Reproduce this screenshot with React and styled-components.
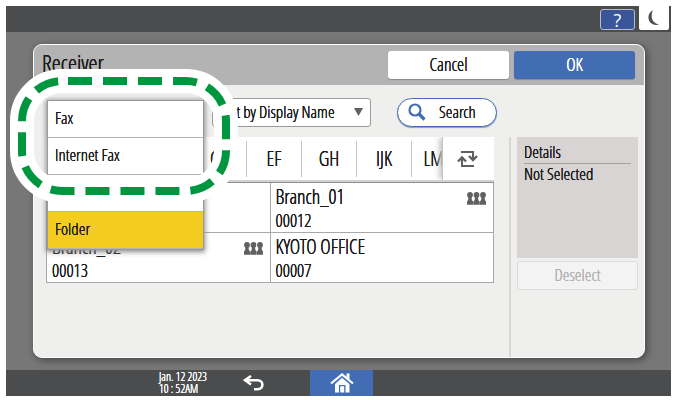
import React from "react";
import styled, { createGlobalStyle } from "styled-components";

const color = {
  bar: "#4b4c4e",
  backdrop: "#777777",
  header: "#b3b3b3",
  panel: "#efefed",
  line: "#a9a9a9",
  blue: "#426db5",
  navy: "#3a5699",
  yellow: "#f4cc20",
  green: "#009640",
  ink: "#1a1a1a",
  icon: "#5f6062",
};

const GlobalStyle = createGlobalStyle`
  *, *::before, *::after { box-sizing: border-box; }
  body { margin: 0; background: #fff; }
  body, button {
    font-family: "Open Sans Condensed Light", "Open Sans Condensed", "Open Sans", sans-serif;
    font-weight: 300;
    color: ${color.ink};
    text-shadow: 0 0 currentColor, 0 0 currentColor;
  }
  button { border: 0; padding: 0; background: none; cursor: pointer; }
  h1, h2, p, ul { margin: 0; padding: 0; font-weight: 300; }
  ul { list-style: none; }
  svg { display: block; }
`;

const Screen = styled.div`
  display: flex;
  flex-direction: column;
  min-height: calc(100vh - 10px);
  margin: 6px 4px 4px 6px;
  background: ${color.backdrop};
`;

const StatusBar = styled.header`
  display: flex;
  justify-content: flex-end;
  align-items: flex-start;
  gap: 4px;
  height: 26px;
  padding-right: 2px;
  background: ${color.bar};
`;

const HelpButton = styled.button`
  width: 35px;
  height: 21px;
  margin-top: 3px;
  border: 1px solid #b9bdc9;
  border-radius: 3px;
  background: ${color.navy};
  color: #fff;
  font: 400 18px/18px "Open Sans", sans-serif;
  text-shadow: none;
`;

const SleepButton = styled.button`
  display: grid;
  place-items: center;
  width: 30px;
  height: 24px;
  border-radius: 0 0 2px 2px;
  background: #fff;
`;

const Panel = styled.main`
  position: relative;
  flex: 1;
  display: flex;
  flex-direction: column;
  margin: 12px 26px 12px 27px;
  border: 1px solid #fff;
  border-radius: 9px;
  background: ${color.panel};
  box-shadow: 2px 2px 6px 1px #4c4f4e;
`;

const PanelHeader = styled.div`
  display: flex;
  align-items: center;
  gap: 5px;
  height: 40px;
  padding: 0 9px 0 8px;
  border-radius: 8px 8px 0 0;
  background: ${color.header};
`;

const Title = styled.h1`
  flex: 1;
  font-size: 23px;
  line-height: 28px;
  padding-bottom: 4px;
`;

const ActionButton = styled.button`
  width: 121px;
  height: 28px;
  padding-bottom: 2px;
  border-radius: 3px;
  background: ${(p) => (p.$primary ? color.blue : "#fff")};
  color: ${(p) => (p.$primary ? "#fff" : color.ink)};
  font-size: 18px;
  line-height: 24px;
  box-shadow: 0 1px 1px #888;
`;

const Toolbar = styled.div`
  display: flex;
  align-items: center;
  gap: 26px;
  height: 52px;
  padding: 2px 0 0 178px;
`;

const SortButton = styled.button`
  display: flex;
  align-items: center;
  justify-content: space-between;
  width: 159px;
  height: 29px;
  padding: 0 7px 0 5px;
  border: 1px solid #9a9a9a;
  border-radius: 3px;
  background: #fff;
  font-size: 17px;
  line-height: 24px;
`;

const SearchButton = styled.button`
  display: flex;
  align-items: center;
  gap: 13px;
  width: 100px;
  height: 29px;
  padding-left: 10px;
  border: 1px solid ${color.blue};
  border-radius: 15px;
  background: #fff;
  box-shadow: 0 1px 1px #8a9cc0;
  font-size: 17px;
  line-height: 24px;
`;

const Content = styled.div`
  flex: 1;
  display: flex;
  padding: 0 6px 0 12px;
`;

const AddressBook = styled.section`
  flex: 1;
  min-width: 0;
`;

const TabBar = styled.div`
  display: flex;
  height: 45px;
  border-radius: 3px 3px 0 0;
  background: #fff;
  border-bottom: 2px solid #d2d2d2;
`;

const TabStrip = styled.nav`
  flex: 1;
  display: flex;
  align-items: center;
  min-width: 0;
  overflow: hidden;
`;

const Tab = styled.button`
  flex: none;
  width: ${(p) => (p.$wide ? 91 : 55)}px;
  height: 36px;
  border-right: 1px solid #c4c4c4;
  font-size: 20px;
  line-height: 36px;
`;

const SwitchButton = styled.button`
  display: grid;
  place-items: center;
  width: 52px;
  height: 43px;
  padding-right: 3px;
  border-left: 1px solid #c4c4c4;
  background: #fff;
  box-shadow: -4px 0 5px -1px #c8c8c8;
  clip-path: inset(0 0 0 -9px);
`;

const EntryGrid = styled.ul`
  display: grid;
  grid-template-columns: 1fr 1fr;
  border-top: 1px solid #8f8f8f;
  border-left: 1px solid ${color.line};
`;

const Entry = styled.li`
  display: flex;
  justify-content: space-between;
  height: 50px;
  padding: 0 7px 0 5px;
  border-right: 1px solid ${color.line};
  border-bottom: 1px solid ${color.line};
  background: #fff;
`;

const EntryName = styled.p`
  font-size: 20px;
  line-height: 27px;
`;

const EntryNumber = styled.p`
  font-size: 18px;
  line-height: 20px;
`;

const GroupMark = styled.span`
  margin-top: 9px;
`;

const Sidebar = styled.aside`
  display: flex;
  flex-direction: column;
  gap: 3px;
  width: 129px;
  margin-left: 15px;
  padding-left: 6px;
  border-left: 2px solid #d6d6d6;
`;

const Details = styled.section`
  height: 121px;
  padding: 4px 7px;
  background: #d8d4d3;
`;

const DetailsTitle = styled.h2`
  border-bottom: 1px solid #a2a4a2;
  font-size: 17px;
  line-height: 22px;
`;

const DetailsText = styled.p`
  font-size: 17px;
  line-height: 20px;
`;

const DeselectButton = styled.button`
  height: 29px;
  padding-bottom: 2px;
  border: 1px solid #dcdcdc;
  border-radius: 3px;
  background: #f3f3f3;
  color: #b4b4b4;
  font-size: 17px;
  line-height: 24px;
`;

const TypeMenu = styled.ul`
  position: absolute;
  top: 55px;
  left: 13px;
  width: 157px;
  border: 1px solid #9a9a9a;
  background: #fff;
  box-shadow: 0 1px 5px 1px #8a8a8a;
`;

const TypeOption = styled.button`
  display: block;
  width: 100%;
  height: 37px;
  padding: 0 0 2px 7px;
  border-bottom: 1px solid #b4b4b4;
  background: ${(p) => (p.$selected ? color.yellow : "#fff")};
  font-size: 17px;
  line-height: 24px;
  text-align: left;
`;

const Highlight = styled.svg`
  position: absolute;
  top: 23px;
  left: -24px;
  pointer-events: none;
`;

const TaskBar = styled.footer`
  display: flex;
  align-items: center;
  height: 26px;
  padding-left: 153px;
  background: ${color.bar};
`;

const Clock = styled.p`
  width: 68px;
  color: #fff;
  font-size: 12px;
  line-height: 12px;
  white-space: nowrap;
`;

const TaskButton = styled.button`
  display: grid;
  place-items: center;
  width: ${(p) => (p.$home ? 63 : 54)}px;
  height: 26px;
  margin-left: ${(p) => (p.$home ? 29 : 0)}px;
  background: ${(p) => (p.$home ? color.blue : "transparent")};
`;

const MoonIcon = () => (
  <svg width="12" height="16" viewBox="0 0 12 16" aria-hidden="true">
    <path d="M5 0C1.500 2 0 5 .5 8.500 1.200 13 5.500 16 11 14.500 6.500 13.500 4 10.500 3.700 7 3.500 4.500 4 2 5 0Z" fill="#4b4c4e" />
  </svg>
);

const DownIcon = () => (
  <svg width="9" height="8" viewBox="0 0 9 8" aria-hidden="true">
    <path d="M0 0h9L4.500 8Z" fill={color.icon} />
  </svg>
);

const SearchIcon = () => (
  <svg width="18" height="18" viewBox="0 0 18 18" fill="none" stroke={color.blue} aria-hidden="true">
    <circle cx="7" cy="7" r="5.500" strokeWidth="2.200" />
    <path d="M11 11l5.500 5.500" strokeWidth="3.200" />
  </svg>
);

const SwitchIcon = () => (
  <svg width="21" height="16" viewBox="0 0 21 16" fill="none" stroke={color.icon} strokeWidth="2" aria-hidden="true">
    <path d="M4 1h12v7M17 15H5V7" />
    <path d="M12 5l4 4 4-4M1 10.500l4-4 4 4" strokeWidth="2.400" />
  </svg>
);

const GroupIcon = () => (
  <svg width="19" height="13" viewBox="0 0 19 13" fill={color.icon} aria-label="Group" role="img">
    {[3, 9.5, 16].map((x) => (
      <g key={x}>
        <circle cx={x} cy="3" r="2.900" />
        <path d={`M${x - 1.5} 5h3l.4 3 1.300 1.800v2.900h-6.400V9.800L${x - 1.9} 8Z`} />
      </g>
    ))}
  </svg>
);

const BackIcon = () => (
  <svg width="22" height="16" viewBox="0 0 22 16" fill="none" stroke="#fff" strokeWidth="2.600" aria-hidden="true">
    <path d="M8 1L2 5.200l6 4.300M2.500 5.200H14.500c6.500 0 6.500 9 0 9H11" />
  </svg>
);

const HomeIcon = () => (
  <svg width="24" height="20" viewBox="0 0 24 20" aria-hidden="true">
    <path d="M1 10.500L12 1.500l11 9" fill="none" stroke="#fff" strokeWidth="2.200" />
    <path d="M16.500.5h3v6l-3-2.500Z" fill="#fff" />
    <path d="M12 4.800l7.500 6.200v8.500h-4V12h-6.500v7.500h-4V11Z" fill="#fff" />
    <path d="M10.200 13.200h4v6.300h-4Z" fill="#fff" />
  </svg>
);

const tabs = ["CD", "EF", "GH", "IJK", "LMN"];

const entries = [
  { id: "first" },
  { id: "branch1", name: "Branch_01", number: "00012", group: true },
  { id: "branch2", name: "Branch_02", number: "00013", group: true },
  { id: "kyoto", name: "KYOTO OFFICE", number: "00007" },
];

const types = [
  { id: "fax", label: "Fax" },
  { id: "ifax", label: "Internet Fax" },
  { id: "blank", label: "" },
  { id: "folder", label: "Folder", selected: true },
];

export default function App() {
  return (
    <>
      <GlobalStyle />
      <Screen>
        <StatusBar>
          <HelpButton>?</HelpButton>
          <SleepButton aria-label="Sleep"><MoonIcon /></SleepButton>
        </StatusBar>
        <Panel>
          <PanelHeader>
            <Title>Receiver</Title>
            <ActionButton>Cancel</ActionButton>
            <ActionButton $primary>OK</ActionButton>
          </PanelHeader>
          <Toolbar>
            <SortButton>Sort by Display Name<DownIcon /></SortButton>
            <SearchButton><SearchIcon />Search</SearchButton>
          </Toolbar>
          <Content>
            <AddressBook>
              <TabBar>
                <TabStrip>
                  <Tab $wide aria-label="Frequent" />
                  <Tab aria-label="AB" />
                  {tabs.map((t) => <Tab key={t}>{t}</Tab>)}
                </TabStrip>
                <SwitchButton aria-label="Switch title"><SwitchIcon /></SwitchButton>
              </TabBar>
              <EntryGrid>
                {entries.map((e) => (
                  <Entry key={e.id}>
                    <div>
                      <EntryName>{e.name}</EntryName>
                      <EntryNumber>{e.number}</EntryNumber>
                    </div>
                    {e.group && <GroupMark><GroupIcon /></GroupMark>}
                  </Entry>
                ))}
              </EntryGrid>
            </AddressBook>
            <Sidebar>
              <Details>
                <DetailsTitle>Details</DetailsTitle>
                <DetailsText>Not Selected</DetailsText>
              </Details>
              <DeselectButton disabled>Deselect</DeselectButton>
            </Sidebar>
          </Content>
          <TypeMenu>
            {types.map((t) => (
              <li key={t.id}>
                <TypeOption $selected={t.selected}>{t.label}</TypeOption>
              </li>
            ))}
          </TypeMenu>
          <Highlight width="230" height="136" viewBox="0 0 230 136" fill="none" aria-hidden="true">
            <rect x="12" y="13" width="204" height="110" rx="40" stroke="#fff" strokeWidth="24" />
            <rect x="12" y="13" width="204" height="110" rx="40" stroke={color.green} strokeWidth="8" strokeDasharray="24 11" strokeDashoffset="-6" />
          </Highlight>
        </Panel>
        <TaskBar>
          <Clock>Jan. 12 2023<br />10 : 52AM</Clock>
          <TaskButton aria-label="Back"><BackIcon /></TaskButton>
          <TaskButton $home aria-label="Home"><HomeIcon /></TaskButton>
        </TaskBar>
      </Screen>
    </>
  );
}
